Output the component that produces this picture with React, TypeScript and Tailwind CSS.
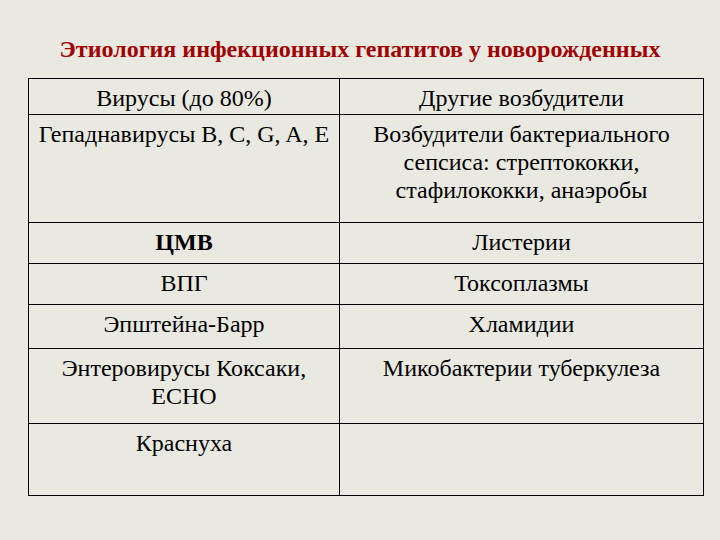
import React from "react";

type Row = { h: string; left: React.ReactNode; right: React.ReactNode; first?: boolean };

const rows: Row[] = [
  { h: "h-[35px]", left: "Вирусы (до 80%)", right: "Другие возбудители", first: true },
  {
    h: "h-[108px]",
    left: "Гепаднавирусы B, C, G, A, E",
    right: (
      <>
        Возбудители бактериального
        <br />
        сепсиса: стрептококки,
        <br />
        стафилококки, анаэробы
      </>
    ),
  },
  { h: "h-[41px]", left: <span className="font-bold">ЦМВ</span>, right: "Листерии" },
  { h: "h-[41px]", left: "ВПГ", right: "Токсоплазмы" },
  { h: "h-[44px]", left: "Эпштейна-Барр", right: "Хламидии" },
  {
    h: "h-[75px]",
    left: (
      <>
        Энтеровирусы Коксаки,
        <br />
        ECHO
      </>
    ),
    right: "Микобактерии туберкулеза",
  },
  { h: "h-[72px]", left: "Краснуха", right: "" },
];

export default function App() {
  return (
    <div className="w-[720px] h-[540px] bg-[#e9e9e1] overflow-hidden font-['Liberation_Serif','Times_New_Roman',serif]">
      <h1 className="pt-[35px] text-center text-[24px] leading-[28px] font-bold text-[#a00000] whitespace-nowrap">
        Этиология инфекционных гепатитов у новорожденных
      </h1>
      <div className="mt-[15px] ml-[28px] w-[676px] border border-black text-[24px] leading-[28px] text-black">
        {rows.map((r, i) => (
          <div
            key={i}
            className={`flex box-border ${r.h} ${r.first ? "" : "border-t border-black"}`}
          >
            <div className="w-[311px] shrink-0 border-r border-black pt-[5px] px-[4px] text-center whitespace-nowrap">
              {r.left}
            </div>
            <div className="flex-1 pt-[5px] px-[4px] text-center whitespace-nowrap">{r.right}</div>
          </div>
        ))}
      </div>
    </div>
  );
}
